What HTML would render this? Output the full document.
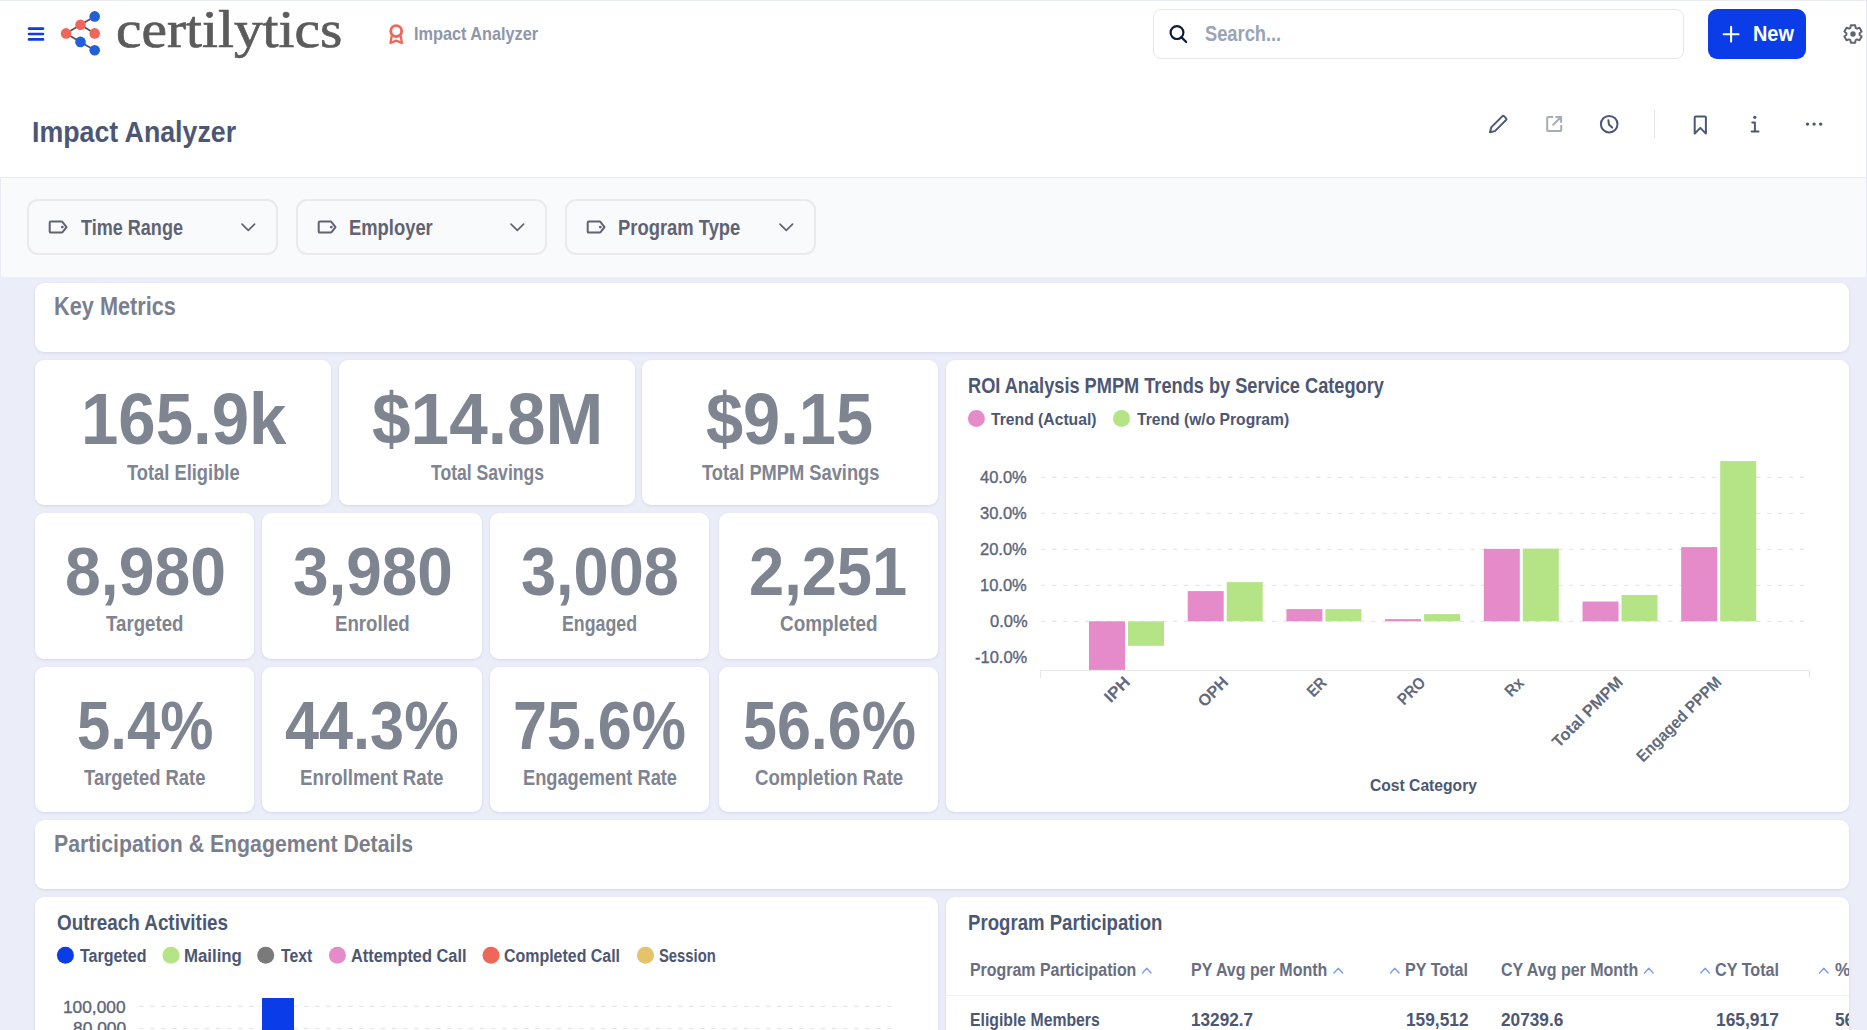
<!DOCTYPE html>
<html><head><meta charset="utf-8"><style>
html,body{margin:0;padding:0;width:1867px;height:1030px;overflow:hidden;background:#ebeef9;}
.t{position:absolute;white-space:nowrap;line-height:normal;transform-origin:0 0;}
</style></head><body>
<div style="position:absolute;left:0px;top:0px;width:1867px;height:177px;background:#fff;"></div><div style="position:absolute;left:0px;top:0px;width:1867px;height:1px;background:#e8ebf4;"></div><div style="position:absolute;left:0px;top:177px;width:1867px;height:1px;background:#ebe9ea;"></div><div style="position:absolute;left:0px;top:178px;width:1867px;height:99px;background:#f9fafc;"></div><div style="position:absolute;left:0px;top:277px;width:1867px;height:753px;background:#ebeef9;"></div><div style="position:absolute;left:1866px;top:0px;width:1px;height:277px;background:#e6e9f5;"></div><div style="position:absolute;left:0px;top:178px;width:1px;height:99px;background:#e8ebf6;"></div><div style="position:absolute;left:1153px;top:9px;width:531px;height:50px;box-sizing:border-box;border:1px solid #e6e7eb;border-radius:8px;background:#fff;"></div><div style="position:absolute;left:1708px;top:9px;width:98px;height:50px;background:#0a3de8;border-radius:9px;"></div><div style="position:absolute;left:1654px;top:110px;width:1px;height:28px;background:#e3e5ea;"></div><div style="position:absolute;left:26.5px;top:199px;width:251px;height:56px;box-sizing:border-box;border:2px solid #ebe9e9;border-radius:11px;"></div><div style="position:absolute;left:295.5px;top:199px;width:251px;height:56px;box-sizing:border-box;border:2px solid #ebe9e9;border-radius:11px;"></div><div style="position:absolute;left:564.5px;top:199px;width:251px;height:56px;box-sizing:border-box;border:2px solid #ebe9e9;border-radius:11px;"></div><div style="position:absolute;left:35px;top:283px;width:1814px;height:69px;background:#fff;border-radius:9px;box-shadow:0 1px 3px rgba(60,70,110,0.13);"></div><div style="position:absolute;left:35px;top:360px;width:296px;height:145px;background:#fff;border-radius:9px;box-shadow:0 1px 3px rgba(60,70,110,0.13);"></div><div style="position:absolute;left:339px;top:360px;width:296px;height:145px;background:#fff;border-radius:9px;box-shadow:0 1px 3px rgba(60,70,110,0.13);"></div><div style="position:absolute;left:642px;top:360px;width:296px;height:145px;background:#fff;border-radius:9px;box-shadow:0 1px 3px rgba(60,70,110,0.13);"></div><div style="position:absolute;left:35px;top:513px;width:219px;height:146px;background:#fff;border-radius:9px;box-shadow:0 1px 3px rgba(60,70,110,0.13);"></div><div style="position:absolute;left:35px;top:667px;width:219px;height:145px;background:#fff;border-radius:9px;box-shadow:0 1px 3px rgba(60,70,110,0.13);"></div><div style="position:absolute;left:262px;top:513px;width:220px;height:146px;background:#fff;border-radius:9px;box-shadow:0 1px 3px rgba(60,70,110,0.13);"></div><div style="position:absolute;left:262px;top:667px;width:220px;height:145px;background:#fff;border-radius:9px;box-shadow:0 1px 3px rgba(60,70,110,0.13);"></div><div style="position:absolute;left:490px;top:513px;width:219px;height:146px;background:#fff;border-radius:9px;box-shadow:0 1px 3px rgba(60,70,110,0.13);"></div><div style="position:absolute;left:490px;top:667px;width:219px;height:145px;background:#fff;border-radius:9px;box-shadow:0 1px 3px rgba(60,70,110,0.13);"></div><div style="position:absolute;left:719px;top:513px;width:219px;height:146px;background:#fff;border-radius:9px;box-shadow:0 1px 3px rgba(60,70,110,0.13);"></div><div style="position:absolute;left:719px;top:667px;width:219px;height:145px;background:#fff;border-radius:9px;box-shadow:0 1px 3px rgba(60,70,110,0.13);"></div><div style="position:absolute;left:946px;top:360px;width:903px;height:452px;background:#fff;border-radius:9px;box-shadow:0 1px 3px rgba(60,70,110,0.13);"></div><div style="position:absolute;left:35px;top:820px;width:1814px;height:69px;background:#fff;border-radius:9px;box-shadow:0 1px 3px rgba(60,70,110,0.13);"></div><div style="position:absolute;left:35px;top:897px;width:903px;height:143px;background:#fff;border-radius:9px;box-shadow:0 1px 3px rgba(60,70,110,0.13);"></div><div style="position:absolute;left:946px;top:897px;width:903px;height:143px;background:#fff;border-radius:9px;box-shadow:0 1px 3px rgba(60,70,110,0.13);"></div><div style="position:absolute;left:946px;top:994.5px;width:903px;height:1px;background:#f1f2f4;"></div>
<svg width="1867" height="1030" style="position:absolute;left:0;top:0"><g stroke="#0a3de8" stroke-width="2.6" stroke-linecap="round"><path d="M29 28.6H43M29 34H43M29 39.4H43"/></g><line x1="66.1" y1="33.4" x2="80.5" y2="24.8" stroke="#555" stroke-width="1.7"/><line x1="80.5" y1="24.8" x2="94.7" y2="16.4" stroke="#555" stroke-width="1.7"/><line x1="80.5" y1="24.8" x2="94.7" y2="33.4" stroke="#555" stroke-width="1.7"/><line x1="66.1" y1="33.4" x2="80.5" y2="41.9" stroke="#555" stroke-width="1.7"/><line x1="80.5" y1="41.9" x2="94.7" y2="50.3" stroke="#555" stroke-width="1.7"/><circle cx="94.7" cy="16.4" r="5.3" fill="#2160d8"/><circle cx="80.5" cy="24.8" r="5.3" fill="#f0675a"/><circle cx="66.1" cy="33.4" r="5.3" fill="#f0675a"/><circle cx="94.7" cy="33.4" r="5.3" fill="#f0675a"/><circle cx="80.5" cy="41.9" r="5.3" fill="#2160d8"/><circle cx="94.7" cy="50.3" r="5.3" fill="#2160d8"/><g fill="none" stroke="#f0675a" stroke-width="2.1" stroke-linejoin="round"><circle cx="396.2" cy="31.1" r="5.45" stroke-width="2.9"/><path d="M391.7 35.6L390.5 43L396.2 40.6L401.9 43L400.7 35.6" stroke-width="2.3"/></g><g fill="none" stroke="#0c1b3c" stroke-width="2.2" stroke-linecap="round"><circle cx="1177" cy="32.6" r="6.4"/><path d="M1181.6 37.4L1186.2 42"/></g><g stroke="#fff" stroke-width="2.1" stroke-linecap="round"><path d="M1731.1 26.8V41.6M1723.7 34.2H1738.5"/></g><polygon points="1850.32,27.97 1850.82,25.27 1855.18,25.27 1855.68,27.97 1856.88,28.66 1859.47,27.75 1861.65,31.52 1859.56,33.31 1859.56,34.69 1861.65,36.48 1859.47,40.25 1856.88,39.34 1855.68,40.03 1855.18,42.73 1850.82,42.73 1850.32,40.03 1849.12,39.34 1846.53,40.25 1844.35,36.48 1846.44,34.69 1846.44,33.31 1844.35,31.52 1846.53,27.75 1849.12,28.66" fill="none" stroke="#5f6470" stroke-width="1.9" stroke-linejoin="round"/><circle cx="1853" cy="34" r="2.7" fill="#5f6470"/><g fill="none" stroke="#4c5773" stroke-width="2" stroke-linejoin="round" stroke-linecap="round"><path d="M1490 132.3L1491.2 127.4L1502.2 116.4Q1503.2 115.4 1504.2 116.4L1505.9 118.1Q1506.9 119.1 1505.9 120.1L1494.9 131.1Z"/><circle cx="1609.2" cy="124.2" r="8.3"/><path d="M1608.4 120.3L1608.9 124.6L1612.2 127.6"/><path d="M1694.7 117.4Q1694.7 116.4 1695.7 116.4H1704.9Q1705.9 116.4 1705.9 117.4V133.6L1700.3 127.9L1694.7 133.6Z"/><path d="M1752.3 122.6H1754.9V131.5M1751.6 131.6H1758.5"/></g><g fill="none" stroke="#a6acb9" stroke-width="2" stroke-linejoin="round" stroke-linecap="round"><path d="M1552.5 117H1548.4Q1547.2 117 1547.2 118.2V129.9Q1547.2 131.1 1548.4 131.1H1560Q1561.2 131.1 1561.2 129.9V125.8"/><path d="M1553.2 124.8L1560.8 117.2M1556.1 117H1561.1V122"/></g><circle cx="1754.8" cy="117.3" r="1.6" fill="#4c5773"/><circle cx="1807.5" cy="124.1" r="1.7" fill="#4c5773"/><circle cx="1814.1" cy="124.1" r="1.7" fill="#4c5773"/><circle cx="1820.7" cy="124.1" r="1.7" fill="#4c5773"/><g fill="none" stroke="#5f6372" stroke-width="2" stroke-linejoin="round"><path d="M50.9 221.6H61.6Q62.3 221.6 62.8 222.3L66.5 227.1L62.8 231.9Q62.3 232.6 61.6 232.6H50.9Q49.7 232.6 49.7 231.4V222.8Q49.7 221.6 50.9 221.6Z"/></g><circle cx="62.3" cy="227.1" r="1.4" fill="#5f6372"/><path d="M242 224.2L248.3 230.4L254.6 224.2" fill="none" stroke="#5f6372" stroke-width="1.7" stroke-linecap="round" stroke-linejoin="round"/><g fill="none" stroke="#5f6372" stroke-width="2" stroke-linejoin="round"><path d="M319.9 221.6H330.6Q331.3 221.6 331.8 222.3L335.5 227.1L331.8 231.9Q331.3 232.6 330.6 232.6H319.9Q318.7 232.6 318.7 231.4V222.8Q318.7 221.6 319.9 221.6Z"/></g><circle cx="331.3" cy="227.1" r="1.4" fill="#5f6372"/><path d="M511 224.2L517.3 230.4L523.6 224.2" fill="none" stroke="#5f6372" stroke-width="1.7" stroke-linecap="round" stroke-linejoin="round"/><g fill="none" stroke="#5f6372" stroke-width="2" stroke-linejoin="round"><path d="M588.9 221.6H599.6Q600.3 221.6 600.8 222.3L604.5 227.1L600.8 231.9Q600.3 232.6 599.6 232.6H588.9Q587.7 232.6 587.7 231.4V222.8Q587.7 221.6 588.9 221.6Z"/></g><circle cx="600.3" cy="227.1" r="1.4" fill="#5f6372"/><path d="M780 224.2L786.3 230.4L792.6 224.2" fill="none" stroke="#5f6372" stroke-width="1.7" stroke-linecap="round" stroke-linejoin="round"/><circle cx="976.4" cy="418.5" r="8.5" fill="#e68bca"/><circle cx="1121.5" cy="418.5" r="8.5" fill="#b5e486"/><line x1="1041" y1="477.3" x2="1804" y2="477.3" stroke="#e2e2e2" stroke-width="1" stroke-dasharray="4.5 6.5"/><line x1="1041" y1="513.3" x2="1804" y2="513.3" stroke="#e2e2e2" stroke-width="1" stroke-dasharray="4.5 6.5"/><line x1="1041" y1="549.3" x2="1804" y2="549.3" stroke="#e2e2e2" stroke-width="1" stroke-dasharray="4.5 6.5"/><line x1="1041" y1="585.3" x2="1804" y2="585.3" stroke="#e2e2e2" stroke-width="1" stroke-dasharray="4.5 6.5"/><line x1="1041" y1="621.3" x2="1804" y2="621.3" stroke="#e2e2e2" stroke-width="1" stroke-dasharray="4.5 6.5"/><path d="M1040.5 678V670.5H1809.5V678" fill="none" stroke="#e6e6e6" stroke-width="1"/><rect x="1089.0" y="621.3" width="36" height="48.6" fill="#e68bca"/><rect x="1128.0" y="621.3" width="36" height="24.5" fill="#b5e486"/><rect x="1187.7" y="591.1" width="36" height="30.2" fill="#e68bca"/><rect x="1226.7" y="582.1" width="36" height="39.2" fill="#b5e486"/><rect x="1286.4" y="609.1" width="36" height="12.2" fill="#e68bca"/><rect x="1325.4" y="609.1" width="36" height="12.2" fill="#b5e486"/><rect x="1385.1" y="619.1" width="36" height="2.2" fill="#e68bca"/><rect x="1424.1" y="614.1" width="36" height="7.2" fill="#b5e486"/><rect x="1483.8" y="548.9" width="36" height="72.4" fill="#e68bca"/><rect x="1522.8" y="548.6" width="36" height="72.7" fill="#b5e486"/><rect x="1582.5" y="601.5" width="36" height="19.8" fill="#e68bca"/><rect x="1621.5" y="595.0" width="36" height="26.3" fill="#b5e486"/><rect x="1681.2" y="547.1" width="36" height="74.2" fill="#e68bca"/><rect x="1720.2" y="461.1" width="36" height="160.2" fill="#b5e486"/><circle cx="65.4" cy="955.3" r="8.5" fill="#0a3de8"/><circle cx="171" cy="955.3" r="8.5" fill="#b5e486"/><circle cx="265.7" cy="955.3" r="8.5" fill="#7a7a7a"/><circle cx="337.4" cy="955.3" r="8.5" fill="#e68bca"/><circle cx="491" cy="955.3" r="8.5" fill="#f0675a"/><circle cx="645.5" cy="955.3" r="8.5" fill="#e6c36a"/><line x1="139" y1="1006.3" x2="894" y2="1006.3" stroke="#e2e2e2" stroke-width="1" stroke-dasharray="4.5 6.5"/><line x1="139" y1="1028.4" x2="894" y2="1028.4" stroke="#e2e2e2" stroke-width="1" stroke-dasharray="4.5 6.5"/><rect x="262" y="998" width="32" height="40" fill="#0a3de8"/><path d="M1142.5 973L1146.8 968.2L1151.1 973" fill="none" stroke="#7c9ff0" stroke-width="1.4" stroke-linecap="round" stroke-linejoin="round"/><path d="M1334.0 973L1338.3 968.2L1342.6 973" fill="none" stroke="#7c9ff0" stroke-width="1.4" stroke-linecap="round" stroke-linejoin="round"/><path d="M1390.5 973L1394.8 968.2L1399.1 973" fill="none" stroke="#7c9ff0" stroke-width="1.4" stroke-linecap="round" stroke-linejoin="round"/><path d="M1644.5 973L1648.8 968.2L1653.1 973" fill="none" stroke="#7c9ff0" stroke-width="1.4" stroke-linecap="round" stroke-linejoin="round"/><path d="M1700.8 973L1705.1 968.2L1709.3999999999999 973" fill="none" stroke="#7c9ff0" stroke-width="1.4" stroke-linecap="round" stroke-linejoin="round"/><path d="M1819.5 973L1823.8 968.2L1828.1 973" fill="none" stroke="#7c9ff0" stroke-width="1.4" stroke-linecap="round" stroke-linejoin="round"/></svg>
<div class="t" style="left:115.70px;top:-0.11px;font-size:51.74px;font-family:'Liberation Serif',serif;font-weight:400;color:#5b5b5b;transform:scaleX(1.1092);-webkit-text-stroke:0.7px #5b5b5b;">certilytics</div><div class="t" style="left:413.74px;top:23.55px;font-size:17.97px;font-family:'Liberation Sans',sans-serif;font-weight:700;color:#8e96ab;transform:scaleX(0.9059);">Impact Analyzer</div><div class="t" style="left:1205.25px;top:20.92px;font-size:21.74px;font-family:'Liberation Sans',sans-serif;font-weight:700;color:#9aa3b8;transform:scaleX(0.8409);">Search...</div><div class="t" style="left:1753.11px;top:21.45px;font-size:21.59px;font-family:'Liberation Sans',sans-serif;font-weight:700;color:#fff;transform:scaleX(0.9215);">New</div><div class="t" style="left:32.06px;top:115.47px;font-size:30.14px;font-family:'Liberation Sans',sans-serif;font-weight:700;color:#4c5773;transform:scaleX(0.8874);">Impact Analyzer</div><div class="t" style="left:81.32px;top:215.15px;font-size:21.59px;font-family:'Liberation Sans',sans-serif;font-weight:700;color:#5f6372;transform:scaleX(0.8361);">Time Range</div><div class="t" style="left:349.30px;top:215.15px;font-size:21.59px;font-family:'Liberation Sans',sans-serif;font-weight:700;color:#5f6372;transform:scaleX(0.8517);">Employer</div><div class="t" style="left:618.30px;top:215.15px;font-size:21.59px;font-family:'Liberation Sans',sans-serif;font-weight:700;color:#5f6372;transform:scaleX(0.8526);">Program Type</div><div class="t" style="left:54.29px;top:292.42px;font-size:24.93px;font-family:'Liberation Sans',sans-serif;font-weight:700;color:#7b7f8d;transform:scaleX(0.8715);">Key Metrics</div><div class="t" style="left:80.77px;top:377.85px;font-size:71.59px;font-family:'Liberation Sans',sans-serif;font-weight:700;color:#7f8491;transform:scaleX(0.9382);">165.9k</div><div class="t" style="left:126.82px;top:459.62px;font-size:22.17px;font-family:'Liberation Sans',sans-serif;font-weight:700;color:#7f8491;transform:scaleX(0.8266);">Total Eligible</div><div class="t" style="left:372.16px;top:377.85px;font-size:71.59px;font-family:'Liberation Sans',sans-serif;font-weight:700;color:#7f8491;transform:scaleX(0.9689);">$14.8M</div><div class="t" style="left:430.82px;top:459.62px;font-size:22.17px;font-family:'Liberation Sans',sans-serif;font-weight:700;color:#7f8491;transform:scaleX(0.7937);">Total Savings</div><div class="t" style="left:706.00px;top:377.85px;font-size:71.59px;font-family:'Liberation Sans',sans-serif;font-weight:700;color:#7f8491;transform:scaleX(0.9323);">$9.15</div><div class="t" style="left:701.52px;top:459.62px;font-size:22.17px;font-family:'Liberation Sans',sans-serif;font-weight:700;color:#7f8491;transform:scaleX(0.8249);">Total PMPM Savings</div><div class="t" style="left:65.17px;top:531.98px;font-size:68.26px;font-family:'Liberation Sans',sans-serif;font-weight:700;color:#7f8491;transform:scaleX(0.9423);">8,980</div><div class="t" style="left:106.31px;top:611.12px;font-size:22.17px;font-family:'Liberation Sans',sans-serif;font-weight:700;color:#7f8491;transform:scaleX(0.8422);">Targeted</div><div class="t" style="left:292.90px;top:531.98px;font-size:68.26px;font-family:'Liberation Sans',sans-serif;font-weight:700;color:#7f8491;transform:scaleX(0.9361);">3,980</div><div class="t" style="left:334.59px;top:611.12px;font-size:22.17px;font-family:'Liberation Sans',sans-serif;font-weight:700;color:#7f8491;transform:scaleX(0.8425);">Enrolled</div><div class="t" style="left:521.22px;top:531.98px;font-size:68.26px;font-family:'Liberation Sans',sans-serif;font-weight:700;color:#7f8491;transform:scaleX(0.9239);">3,008</div><div class="t" style="left:562.14px;top:611.12px;font-size:22.17px;font-family:'Liberation Sans',sans-serif;font-weight:700;color:#7f8491;transform:scaleX(0.8016);">Engaged</div><div class="t" style="left:749.19px;top:531.98px;font-size:68.26px;font-family:'Liberation Sans',sans-serif;font-weight:700;color:#7f8491;transform:scaleX(0.9258);">2,251</div><div class="t" style="left:779.84px;top:611.12px;font-size:22.17px;font-family:'Liberation Sans',sans-serif;font-weight:700;color:#7f8491;transform:scaleX(0.8529);">Completed</div><div class="t" style="left:77.11px;top:685.95px;font-size:68.41px;font-family:'Liberation Sans',sans-serif;font-weight:700;color:#7f8491;transform:scaleX(0.8745);">5.4%</div><div class="t" style="left:84.12px;top:764.89px;font-size:22.32px;font-family:'Liberation Sans',sans-serif;font-weight:700;color:#7f8491;transform:scaleX(0.8256);">Targeted Rate</div><div class="t" style="left:284.68px;top:685.95px;font-size:68.41px;font-family:'Liberation Sans',sans-serif;font-weight:700;color:#7f8491;transform:scaleX(0.8949);">44.3%</div><div class="t" style="left:299.88px;top:764.89px;font-size:22.32px;font-family:'Liberation Sans',sans-serif;font-weight:700;color:#7f8491;transform:scaleX(0.8381);">Enrollment Rate</div><div class="t" style="left:513.26px;top:685.95px;font-size:68.41px;font-family:'Liberation Sans',sans-serif;font-weight:700;color:#7f8491;transform:scaleX(0.8919);">75.6%</div><div class="t" style="left:522.61px;top:764.89px;font-size:22.32px;font-family:'Liberation Sans',sans-serif;font-weight:700;color:#7f8491;transform:scaleX(0.8172);">Engagement Rate</div><div class="t" style="left:742.57px;top:685.95px;font-size:68.41px;font-family:'Liberation Sans',sans-serif;font-weight:700;color:#7f8491;transform:scaleX(0.8918);">56.6%</div><div class="t" style="left:754.65px;top:764.89px;font-size:22.32px;font-family:'Liberation Sans',sans-serif;font-weight:700;color:#7f8491;transform:scaleX(0.8363);">Completion Rate</div><div class="t" style="left:968.42px;top:373.32px;font-size:21.74px;font-family:'Liberation Sans',sans-serif;font-weight:700;color:#4c5773;transform:scaleX(0.8370);">ROI Analysis PMPM Trends by Service Category</div><div class="t" style="left:991.04px;top:409.07px;font-size:17.39px;font-family:'Liberation Sans',sans-serif;font-weight:700;color:#4c5773;transform:scaleX(0.9033);">Trend (Actual)</div><div class="t" style="left:1136.74px;top:409.07px;font-size:17.39px;font-family:'Liberation Sans',sans-serif;font-weight:700;color:#4c5773;transform:scaleX(0.9007);">Trend (w/o Program)</div><div class="t" style="left:980.37px;top:467.80px;font-size:16.81px;font-family:'Liberation Sans',sans-serif;font-weight:400;color:#5d6577;transform:scaleX(0.9821);-webkit-text-stroke:0.35px #5d6577;">40.0%</div><div class="t" style="left:980.37px;top:503.80px;font-size:16.81px;font-family:'Liberation Sans',sans-serif;font-weight:400;color:#5d6577;transform:scaleX(0.9821);-webkit-text-stroke:0.35px #5d6577;">30.0%</div><div class="t" style="left:980.37px;top:539.80px;font-size:16.81px;font-family:'Liberation Sans',sans-serif;font-weight:400;color:#5d6577;transform:scaleX(0.9821);-webkit-text-stroke:0.35px #5d6577;">20.0%</div><div class="t" style="left:980.37px;top:575.80px;font-size:16.81px;font-family:'Liberation Sans',sans-serif;font-weight:400;color:#5d6577;transform:scaleX(0.9821);-webkit-text-stroke:0.35px #5d6577;">10.0%</div><div class="t" style="left:989.53px;top:611.80px;font-size:16.81px;font-family:'Liberation Sans',sans-serif;font-weight:400;color:#5d6577;transform:scaleX(0.9821);-webkit-text-stroke:0.35px #5d6577;">0.0%</div><div class="t" style="left:974.84px;top:647.80px;font-size:16.81px;font-family:'Liberation Sans',sans-serif;font-weight:400;color:#5d6577;transform:scaleX(0.9821);-webkit-text-stroke:0.35px #5d6577;">-10.0%</div><div class="t" style="left:1103.70px;top:668.99px;font-family:'Liberation Sans',sans-serif;font-weight:700;font-size:16.5px;color:#626a7c;transform-origin:26.40px 15.02px;transform:rotate(-45deg) scaleX(1.050);">IPH</div><div class="t" style="left:1194.15px;top:668.99px;font-family:'Liberation Sans',sans-serif;font-weight:700;font-size:16.5px;color:#626a7c;transform-origin:34.65px 15.02px;transform:rotate(-45deg) scaleX(0.984);">OPH</div><div class="t" style="left:1304.98px;top:668.99px;font-family:'Liberation Sans',sans-serif;font-weight:700;font-size:16.5px;color:#626a7c;transform-origin:22.52px 15.02px;transform:rotate(-45deg) scaleX(0.880);">ER</div><div class="t" style="left:1391.14px;top:668.99px;font-family:'Liberation Sans',sans-serif;font-weight:700;font-size:16.5px;color:#626a7c;transform-origin:35.06px 15.02px;transform:rotate(-45deg) scaleX(0.888);">PRO</div><div class="t" style="left:1503.94px;top:668.99px;font-family:'Liberation Sans',sans-serif;font-weight:700;font-size:16.5px;color:#626a7c;transform-origin:20.96px 15.02px;transform:rotate(-45deg) scaleX(0.921);">Rx</div><div class="t" style="left:1532.44px;top:668.99px;font-family:'Liberation Sans',sans-serif;font-weight:700;font-size:16.5px;color:#626a7c;transform-origin:91.16px 15.02px;transform:rotate(-45deg) scaleX(0.999);">Total PMPM</div><div class="t" style="left:1602.43px;top:668.99px;font-family:'Liberation Sans',sans-serif;font-weight:700;font-size:16.5px;color:#626a7c;transform-origin:119.87px 15.02px;transform:rotate(-45deg) scaleX(0.931);">Engaged PPPM</div><div class="t" style="left:1370.47px;top:776.24px;font-size:17.10px;font-family:'Liberation Sans',sans-serif;font-weight:700;color:#4c5773;transform:scaleX(0.9154);">Cost Category</div><div class="t" style="left:53.92px;top:829.95px;font-size:24.78px;font-family:'Liberation Sans',sans-serif;font-weight:700;color:#7b7f8d;transform:scaleX(0.8585);">Participation &amp; Engagement Details</div><div class="t" style="left:57.15px;top:910.61px;font-size:21.30px;font-family:'Liberation Sans',sans-serif;font-weight:700;color:#4c5773;transform:scaleX(0.8850);">Outreach Activities</div><div class="t" style="left:80.14px;top:945.45px;font-size:18.41px;font-family:'Liberation Sans',sans-serif;font-weight:700;color:#4c5773;transform:scaleX(0.8720);">Targeted</div><div class="t" style="left:184.21px;top:945.45px;font-size:18.41px;font-family:'Liberation Sans',sans-serif;font-weight:700;color:#4c5773;transform:scaleX(0.9129);">Mailing</div><div class="t" style="left:280.54px;top:945.45px;font-size:18.41px;font-family:'Liberation Sans',sans-serif;font-weight:700;color:#4c5773;transform:scaleX(0.8593);">Text</div><div class="t" style="left:351.39px;top:945.45px;font-size:18.41px;font-family:'Liberation Sans',sans-serif;font-weight:700;color:#4c5773;transform:scaleX(0.8893);">Attempted Call</div><div class="t" style="left:504.36px;top:945.45px;font-size:18.41px;font-family:'Liberation Sans',sans-serif;font-weight:700;color:#4c5773;transform:scaleX(0.8661);">Completed Call</div><div class="t" style="left:659.16px;top:945.45px;font-size:18.41px;font-family:'Liberation Sans',sans-serif;font-weight:700;color:#4c5773;transform:scaleX(0.8037);">Session</div><div class="t" style="left:63.30px;top:996.51px;font-size:17.25px;font-family:'Liberation Sans',sans-serif;font-weight:400;color:#5d6577;transform:scaleX(1.0025);-webkit-text-stroke:0.35px #5d6577;">100,000</div><div class="t" style="left:72.62px;top:1018.11px;font-size:17.25px;font-family:'Liberation Sans',sans-serif;font-weight:400;color:#5d6577;transform:scaleX(1.0079);-webkit-text-stroke:0.35px #5d6577;">80,000</div><div class="t" style="left:967.89px;top:909.72px;font-size:22.17px;font-family:'Liberation Sans',sans-serif;font-weight:700;color:#4c5773;transform:scaleX(0.8399);">Program Participation</div>
<div style="position:absolute;left:946px;top:897px;width:903px;height:140px;overflow:hidden;"><div style="position:absolute;left:-946px;top:-897px;width:1867px;height:1030px;"><div class="t" style="left:969.77px;top:959.98px;font-size:17.83px;font-family:'Liberation Sans',sans-serif;font-weight:700;color:#696e7f;transform:scaleX(0.8931);">Program Participation</div><div class="t" style="left:1191.46px;top:959.98px;font-size:17.83px;font-family:'Liberation Sans',sans-serif;font-weight:700;color:#696e7f;transform:scaleX(0.8974);">PY Avg per Month</div><div class="t" style="left:1405.05px;top:959.98px;font-size:17.83px;font-family:'Liberation Sans',sans-serif;font-weight:700;color:#696e7f;transform:scaleX(0.9035);">PY Total</div><div class="t" style="left:1500.66px;top:959.98px;font-size:17.83px;font-family:'Liberation Sans',sans-serif;font-weight:700;color:#696e7f;transform:scaleX(0.8976);">CY Avg per Month</div><div class="t" style="left:1715.35px;top:959.98px;font-size:17.83px;font-family:'Liberation Sans',sans-serif;font-weight:700;color:#696e7f;transform:scaleX(0.9066);">CY Total</div><div class="t" style="left:1834.67px;top:959.98px;font-size:17.83px;font-family:'Liberation Sans',sans-serif;font-weight:700;color:#696e7f;transform:scaleX(0.9700);">% Completed</div><div class="t" style="left:969.77px;top:1009.98px;font-size:17.83px;font-family:'Liberation Sans',sans-serif;font-weight:700;color:#4c5773;transform:scaleX(0.8850);">Eligible Members</div><div class="t" style="left:1191.47px;top:1009.98px;font-size:17.83px;font-family:'Liberation Sans',sans-serif;font-weight:700;color:#4c5773;transform:scaleX(0.9640);">13292.7</div><div class="t" style="left:1405.56px;top:1009.98px;font-size:17.83px;font-family:'Liberation Sans',sans-serif;font-weight:700;color:#4c5773;transform:scaleX(0.9703);">159,512</div><div class="t" style="left:1500.90px;top:1009.98px;font-size:17.83px;font-family:'Liberation Sans',sans-serif;font-weight:700;color:#4c5773;transform:scaleX(0.9669);">20739.6</div><div class="t" style="left:1716.16px;top:1009.98px;font-size:17.83px;font-family:'Liberation Sans',sans-serif;font-weight:700;color:#4c5773;transform:scaleX(0.9751);">165,917</div><div class="t" style="left:1834.58px;top:1009.98px;font-size:17.83px;font-family:'Liberation Sans',sans-serif;font-weight:700;color:#4c5773;transform:scaleX(0.9700);">56.6%</div></div></div>
</body></html>
